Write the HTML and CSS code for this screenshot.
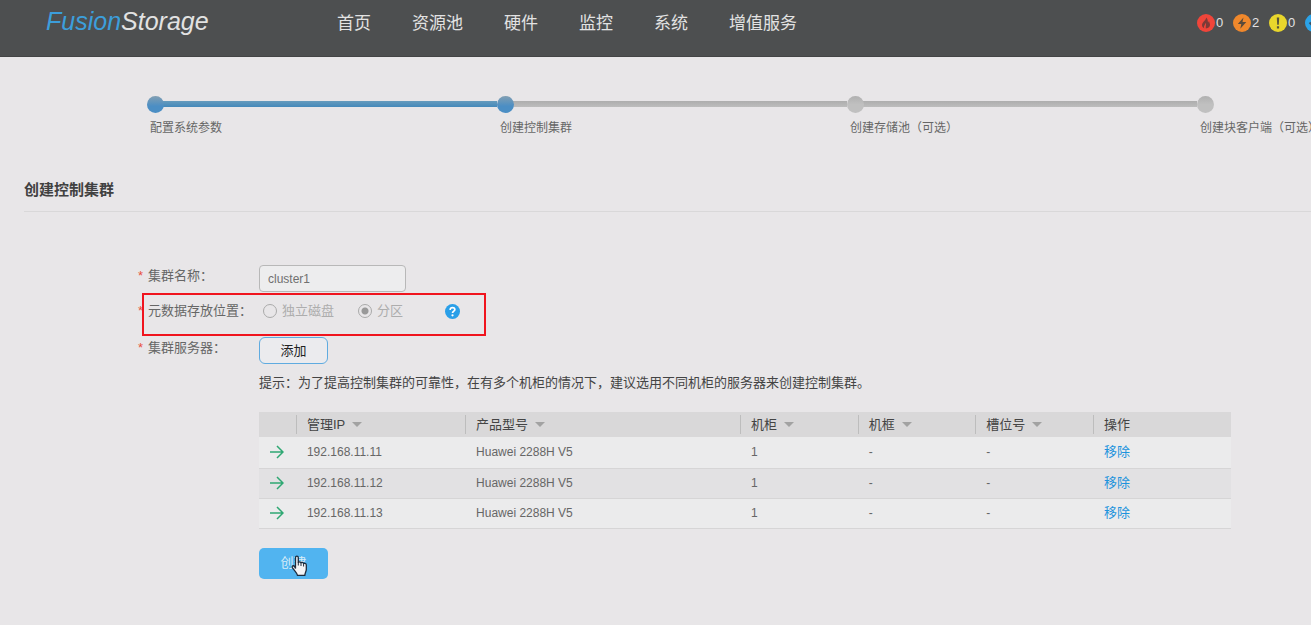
FILE: index.html
```html
<!DOCTYPE html>
<html lang="zh-CN">
<head>
<meta charset="utf-8">
<meta name="viewport" content="width=device-width, initial-scale=1">
<title>FusionStorage</title>
<link rel="stylesheet" href="styles.css">
</head>
<body>
<header class="topbar">
  <a class="logo" href="#"><span class="logo-accent">Fusion</span>Storage</a>
  <nav class="nav">
    <a href="#">首页</a>
    <a href="#">资源池</a>
    <a href="#">硬件</a>
    <a href="#">监控</a>
    <a href="#">系统</a>
    <a href="#">增值服务</a>
  </nav>
  <div class="alerts">
    <a class="alert" href="#"><svg viewBox="0 0 18 18" aria-hidden="true"><circle cx="9" cy="9" r="9" fill="#f0453a"/><path d="M9 3.5C9.6 6 5 8 5 11c0 1.7 1 2.8 2.3 3.3C6.200 12.300 8.500 10.500 8.500 8.800c1.300 1.600-.3 3.800.4 5.700 2.600-.2 4.300-1.600 4.100-3.900-.1-1.500-.9-2.200-.9-3.400-.8.400-1 1.100-1 1.800C10.800 6.800 10.700 4.700 9 3.500z" fill="#7d3a37"/></svg>0</a>
    <a class="alert" href="#"><svg viewBox="0 0 18 18" aria-hidden="true"><circle cx="9" cy="9" r="9" fill="#f0882c"/><path d="M10.500 3.500 4.800 10h3.500l-1 4.700L13.300 8H9.500z" fill="#5b4a3a"/></svg>2</a>
    <a class="alert" href="#"><svg viewBox="0 0 18 18" aria-hidden="true"><circle cx="9" cy="9" r="9" fill="#e8d62c"/><path d="M7.800 3.500h2.400l-.4 7.300H8.200zM7.900 12.300h2.200v2.200H7.900z" fill="#57543a"/></svg>0</a>
    <a class="alert" href="#" aria-label="提示"><svg viewBox="0 0 18 18" aria-hidden="true"><circle cx="9" cy="9" r="9" fill="#2ba3e8"/><path d="M4.500 8.500 8 12l5.500-6" fill="none" stroke="#35536a" stroke-width="2"/></svg></a>
  </div>
</header>

<main class="page">
  <ol class="steps">
    <li class="step done"><span class="dot"></span><span class="step-name">配置系统参数</span></li>
    <li class="step current"><span class="dot"></span><span class="step-name">创建控制集群</span></li>
    <li class="step"><span class="dot"></span><span class="step-name">创建存储池（可选）</span></li>
    <li class="step last"><span class="dot"></span><span class="step-name">创建块客户端（可选）</span></li>
  </ol>

  <h1 class="title">创建控制集群</h1>

  <form class="form">
    <div class="row">
      <label class="label" for="name"><span class="req">*</span>集群名称：</label>
      <input class="text" id="name" type="text" value="cluster1">
    </div>
    <div class="row row-meta" role="radiogroup" aria-labelledby="meta">
      <span class="label" id="meta"><span class="req">*</span>元数据存放位置：</span>
      <div class="options">
        <label class="option"><input type="radio" name="meta" disabled>独立磁盘</label>
        <label class="option"><input type="radio" name="meta" checked disabled>分区</label>
        <button class="help" type="button" aria-label="帮助"><svg viewBox="0 0 16 16" aria-hidden="true"><circle cx="8" cy="8" r="8" fill="#2a9fe8"/><path d="M5.500 6.300C5.500 4.600 6.500 3.800 8 3.800s2.500.9 2.500 2.200C10.500 7.500 8 7.800 8 9.700" fill="none" stroke="#fff" stroke-width="1.800"/><circle cx="8" cy="12" r="1.200" fill="#fff"/></svg></button>
      </div>
      <span class="marker"></span>
    </div>
    <div class="row">
      <span class="label"><span class="req">*</span>集群服务器：</span>
      <button class="add" type="button">添加</button>
    </div>

    <div class="servers">
      <p class="tip">提示：为了提高控制集群的可靠性，在有多个机柜的情况下，建议选用不同机柜的服务器来创建控制集群。</p>
      <table class="table">
        <colgroup><col class="c-icon"><col class="c-ip"><col class="c-model"><col class="c-slot"><col class="c-slot"><col class="c-slot"><col></colgroup>
        <thead>
          <tr><th></th><th><span class="th sort">管理IP</span></th><th><span class="th sort">产品型号</span></th><th><span class="th sort">机柜</span></th><th><span class="th sort">机框</span></th><th><span class="th sort">槽位号</span></th><th><span class="th">操作</span></th></tr>
        </thead>
        <tbody>
          <tr><td><svg class="arrow" viewBox="0 0 14 14" aria-hidden="true"><path d="M0 7h13M7 1l6 6-6 6"/></svg></td><td>192.168.11.11</td><td>Huawei 2288H V5</td><td>1</td><td>-</td><td>-</td><td><a href="#">移除</a></td></tr>
          <tr><td><svg class="arrow" viewBox="0 0 14 14" aria-hidden="true"><path d="M0 7h13M7 1l6 6-6 6"/></svg></td><td>192.168.11.12</td><td>Huawei 2288H V5</td><td>1</td><td>-</td><td>-</td><td><a href="#">移除</a></td></tr>
          <tr><td><svg class="arrow" viewBox="0 0 14 14" aria-hidden="true"><path d="M0 7h13M7 1l6 6-6 6"/></svg></td><td>192.168.11.13</td><td>Huawei 2288H V5</td><td>1</td><td>-</td><td>-</td><td><a href="#">移除</a></td></tr>
        </tbody>
      </table>
      <button class="create" type="button">创建<svg class="pointer" viewBox="0 0 17 22" aria-hidden="true"><path d="M4.500 13.500V2.700C4.500.7 7.300.7 7.300 2.700V8c.2-1.700 2.600-1.500 2.700.2.300-1.300 2.500-1 2.600.7.400-1.100 2.700-.8 2.700 1.100v4.500c0 2-1.300 3-1.500 5.900H6.500c-.3-2.300-3-4.500-5-7.600-1.100-1.900 1-2.700 2-1.300z" fill="#f4f4f6" stroke="#1d2b3c" stroke-width="1.300"/><path d="M7.300 7.500v3M10 8v3M12.600 8.500v3" stroke="#1d2b3c" fill="none"/></svg></button>
    </div>
  </form>
</main>
</body>
</html>
```

FILE: styles.css
```css
* { box-sizing: border-box; }

body {
  margin: 0;
  background: #e8e6e8;
  color: #666;
  font: 13px/20px "Liberation Sans", "Noto Sans CJK SC", sans-serif;
}

a { color: inherit; text-decoration: none; }
button, input { font: inherit; }

.topbar {
  display: flex;
  height: 57px;
  background: #4d4f50;
  border-bottom: 1px solid #434445;
  color: #e2e2e2;
}

.logo {
  width: 337px;
  padding: 7px 0 0 46px;
  font-size: 25px;
  line-height: 29px;
  font-style: italic;
}

.logo-accent { color: #3c9edb; }

.nav {
  display: flex;
  gap: 41px;
  padding-top: 11px;
  font-size: 17px;
  line-height: 25px;
  white-space: nowrap;
}

.alerts {
  display: flex;
  flex: none;
  width: 114px;
  margin-left: auto;
  overflow: hidden;
  padding-top: 13px;
}

.alert {
  display: flex;
  flex: 0 0 36px;
  align-items: center;
  align-self: flex-start;
  gap: 1px;
  height: 20px;
}

.alert svg { flex: none; width: 18px; height: 18px; }

.page { overflow: hidden; }

.steps {
  display: grid;
  grid-template-columns: repeat(4, 30.07%);
  margin: 0 0 0 147px;
  padding: 39px 0 0;
  list-style: none;
}

.step {
  display: flex;
  flex-direction: column;
  gap: 5px;
  background: linear-gradient(#aeaeae, #bdbdbd) 10px 5px / 100% 6px no-repeat;
}

.step.done { background-image: linear-gradient(#659bbd, #4589ba); }
.step.last { background: none; }

.dot {
  width: 17px;
  height: 17px;
  border-radius: 50%;
  background: linear-gradient(#b0b0b0, #c0c0c0 50%);
}

.done .dot, .current .dot { background: linear-gradient(#829fb3, #4b8ec4 60%); }

.step-name { padding-left: 3px; font-size: 12px; white-space: nowrap; }

.title {
  margin: 41px 0 0 24px;
  padding-bottom: 10px;
  border-bottom: 1px solid #d9d8d9;
  color: #414141;
  font-size: 15px;
  line-height: 22px;
}

.form { padding: 53px 80px 0 138px; }

.row {
  display: grid;
  grid-template-columns: 121px 1fr;
  align-items: start;
  justify-items: start;
  position: relative;
}

.label { display: flex; line-height: 22px; white-space: nowrap; }
.req { width: 10px; color: #e8503c; }

.text {
  width: 147px;
  height: 27px;
  padding: 0 8px;
  border: 1px solid #b8b8b8;
  border-radius: 4px;
  background: #ededee;
  color: #707070;
  font-size: 12px;
}

.row-meta { height: 45px; padding-top: 8px; }

.options { display: flex; align-items: center; color: #adadad; line-height: 22px; }
.option { display: flex; align-items: center; gap: 5px; margin: 0 20px 0 4px; }

.option input {
  appearance: none;
  width: 14px;
  height: 14px;
  margin: 0;
  border: 1px solid #aaa;
  border-radius: 50%;
}

.option input:checked { background: radial-gradient(circle, #999 3px, transparent 4px); }

.help {
  width: 15px;
  height: 15px;
  margin-left: 22px;
  padding: 0;
  border: 0;
  background: none;
}

.help svg { display: block; }

.marker {
  position: absolute;
  inset: 1px auto 1px 4px;
  width: 344px;
  border: 2px solid #f0141e;
  pointer-events: none;
}

.add {
  width: 69px;
  height: 27px;
  padding: 0;
  border: 1px solid #5fabe0;
  border-radius: 6px;
  background: #ebebee;
  color: #222;
}

.servers { padding: 9px 0 0 121px; }
.tip { margin: 0 0 19px; color: #444; }

.table {
  width: 100%;
  table-layout: fixed;
  border-collapse: collapse;
  font-size: 12px;
}

.c-icon { width: 3.8%; }
.c-ip { width: 17.4%; }
.c-model { width: 28.3%; }
.c-slot { width: 12.1%; }

.table th {
  height: 25px;
  padding: 0;
  background: #d9d8d9;
  color: #444;
  font-size: 13px;
  font-weight: normal;
  text-align: left;
}

.th {
  display: flex;
  align-items: center;
  gap: 7px;
  height: 19px;
  padding-left: 10px;
  border-left: 1px solid #bdbdbd;
  line-height: 19px;
}

.sort::after {
  content: "";
  border: 5px solid transparent;
  border-top-color: #a2a2a2;
  border-bottom: 0;
}

.table td {
  height: 30px;
  padding: 0 0 0 11px;
  border-bottom: 1px solid #d6d5d6;
  background: #ebebec;
}

.table tbody tr:first-child td { height: 31px; }
.table tbody tr:nth-child(even) td { background: #e2e1e3; }
.table td a { color: #1d93dd; font-size: 13px; }

.arrow {
  display: block;
  width: 14px;
  height: 14px;
  fill: none;
  stroke: #2fa873;
  stroke-width: 1.500;
}

.create {
  position: relative;
  width: 69px;
  height: 31px;
  margin-top: 19px;
  padding: 0;
  border: 0;
  border-radius: 5px;
  background: #51b4f0;
  color: #d8ecf8;
}

.pointer {
  position: absolute;
  left: 32px;
  top: 7px;
  width: 17px;
  height: 22px;
}
```
